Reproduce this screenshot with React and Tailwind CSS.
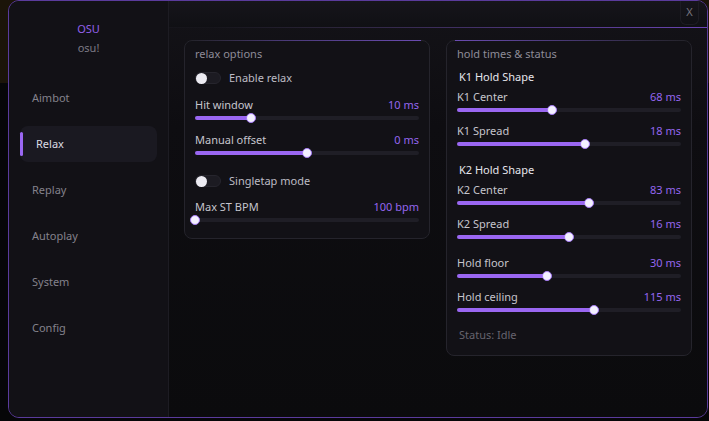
import React from "react";

const navItems = ["Aimbot", "Relax", "Replay", "Autoplay", "System", "Config"];

function Toggle({ label, on = false }) {
  return (
    <div className="flex h-4 items-center gap-2">
      <span className="flex h-[12px] w-[26px] items-center rounded-full border border-[#26252d] bg-[#1c1b22]">
        <span className={`h-[11px] w-[11px] rounded-full bg-[#ecebf2] ${on ? "ml-auto" : ""}`} />
      </span>
      <span className="text-[#bdbcc5]">{label}</span>
    </div>
  );
}

function Slider({ label, value, ratio, className = "" }) {
  return (
    <div className={className}>
      <div className="flex h-4 items-center justify-between">
        <span className="text-[#c6c5cd]">{label}</span>
        <span className="text-[#9466ef]">{value}</span>
      </div>
      <div className="flex h-[10px] items-center">
        <div className="relative h-[4px] w-full rounded-full bg-[#1f1e26]">
          <div className="h-full rounded-full bg-[#9a67f2]" style={{ width: `${ratio * 100}%` }} />
          <span
            className="absolute top-1/2 h-[10px] w-[10px] -translate-x-1/2 -translate-y-1/2 rounded-full border-[1.5px] border-[#a57af5] bg-[#f3f0ff]"
            style={{ left: `${ratio * 100}%` }}
          />
        </div>
      </div>
    </div>
  );
}

function Panel({ title, glow, children, className = "" }) {
  return (
    <section className={`relative rounded-lg border border-[#25242c] bg-[#121116] px-[10px] pt-[5px] ${className}`}>
      <span
        className={`absolute -top-px left-2 right-2 h-px ${
          glow === "right"
            ? "bg-[linear-gradient(to_right,transparent,#4a3a78_40%,#6a4bb0)]"
            : "bg-[linear-gradient(to_right,#6a4bb0,#4a3a78_45%,transparent)]"
        }`}
      />
      <h2 className="flex h-4 items-center text-[#8e8c98]">{title}</h2>
      {children}
    </section>
  );
}

export default function App() {
  return (
    <div
      className="h-[421px] w-[709px] overflow-hidden bg-[linear-gradient(to_bottom,#1b1409_0,#1b1409_83px,#060608_83px)] text-[11px] leading-4"
      style={{ fontFamily: "'Noto Sans', 'Open Sans', sans-serif" }}
    >
      <div className="ml-[8px] flex h-[418px] w-[700px] overflow-hidden rounded-[11px] border border-[#5a3b9c] bg-[#0d0c10]">
        {/* sidebar */}
        <aside className="flex w-[160px] shrink-0 flex-col border-r border-[#1d1c23] bg-[#121116]">
          <div className="mt-[20px] flex flex-col items-center">
            <span className="text-[#9260ec]">OSU</span>
            <span className="mt-[3px] text-[#7c7a85]">osu!</span>
          </div>
          <nav className="mt-[24px] flex flex-col gap-[10px] px-[11px]">
            {navItems.map((item) =>
              item === "Relax" ? (
                <div key={item} className="flex h-[36px] items-center rounded-lg bg-[#1a1921]">
                  <span className="h-[24px] w-[3px] rounded-full bg-[#9a67f2]" />
                  <span className="ml-[13px] text-[#dcdbe3]">{item}</span>
                </div>
              ) : (
                <div key={item} className="flex h-[36px] items-center pl-[12px] text-[#84828c]">
                  {item}
                </div>
              )
            )}
          </nav>
        </aside>

        {/* main */}
        <main className="flex flex-1 flex-col bg-[linear-gradient(to_bottom,#141318,#0e0d11_30%,#0b0b0d)]">
          <header className="flex h-[27px] shrink-0 justify-end border-b border-transparent bg-[linear-gradient(to_bottom,#16151b,#101014)] pr-[8px] [border-image:linear-gradient(to_right,transparent_8%,#2a2438_30%,#6a45b4)_1]">
            <button className="-mt-px flex h-[25px] w-[19px] items-center justify-center rounded-b-md border border-t-0 border-[#1d1c23] text-[11px] text-[#77757f]">
              X
            </button>
          </header>

          <div className="flex items-start gap-[16px] px-[15px] pt-[12px]">
            <Panel title="relax options" glow="right" className="h-[199px] w-[246px]">
              <div className="mt-[8px]">
                <Toggle label="Enable relax" />
              </div>
              <Slider label="Hit window" value="10 ms" ratio={0.25} className="mt-[11px]" />
              <Slider label="Manual offset" value="0 ms" ratio={0.5} className="mt-[9px]" />
              <div className="mt-[15px]">
                <Toggle label="Singletap mode" />
              </div>
              <Slider label="Max ST BPM" value="100 bpm" ratio={0} className="mt-[10px]" />
            </Panel>

            <Panel title="hold times & status" glow="left" className="h-[316px] w-[246px]">
              <h3 className="mt-[7px] flex h-4 items-center pl-[2px] text-[#e6e5ec]">K1 Hold Shape</h3>
              <Slider label="K1 Center" value="68 ms" ratio={0.425} className="mt-[4px]" />
              <Slider label="K1 Spread" value="18 ms" ratio={0.57} className="mt-[8px]" />
              <h3 className="mt-[13px] flex h-4 items-center pl-[2px] text-[#e6e5ec]">K2 Hold Shape</h3>
              <Slider label="K2 Center" value="83 ms" ratio={0.59} className="mt-[4px]" />
              <Slider label="K2 Spread" value="16 ms" ratio={0.5} className="mt-[8px]" />
              <Slider label="Hold floor" value="30 ms" ratio={0.4} className="mt-[13px]" />
              <Slider label="Hold ceiling" value="115 ms" ratio={0.61} className="mt-[8px]" />
              <p className="mt-[12px] flex h-4 items-center pl-[2px] text-[#66646e]">Status: Idle</p>
            </Panel>
          </div>
        </main>
      </div>
    </div>
  );
}
